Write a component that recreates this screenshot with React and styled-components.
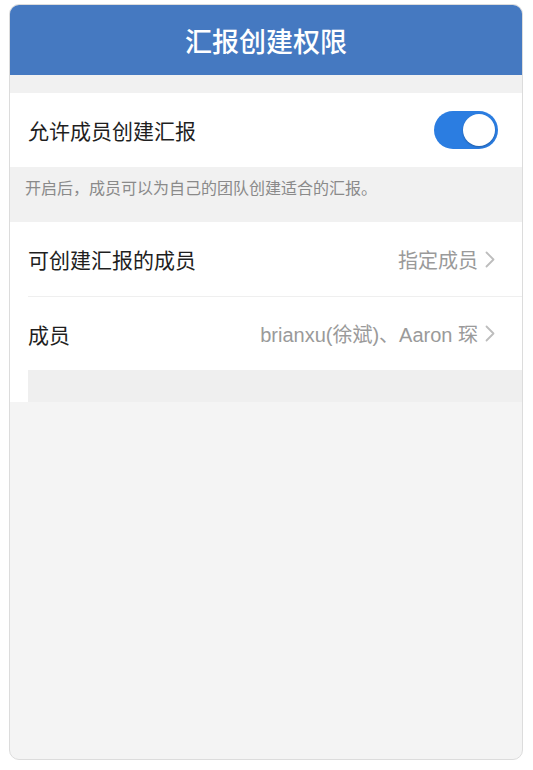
import React from "react";
import styled, { createGlobalStyle } from "styled-components";

const Global = createGlobalStyle`
  html, body { margin: 0; padding: 0; background: #ffffff; }
  body { font-family: "Noto Sans CJK SC", "Noto Sans", sans-serif; }
  * { box-sizing: border-box; }
`;

const Frame = styled.div`
  margin: 4px 0 0 9px;
  width: 514px;
  height: 756px;
  border: 1px solid #dcdcdc;
  border-radius: 10px;
  overflow: hidden;
  background: #f4f4f4;
  display: flex;
  flex-direction: column;
`;

const Header = styled.div`
  height: 70px;
  background: #4579c1;
  color: #ffffff;
  display: flex;
  align-items: center;
  justify-content: center;
  font-size: 27px;
  font-weight: 500;
`;

const Spacer = styled.div`
  height: ${(p) => p.h}px;
  background: ${(p) => p.bg || "#f1f1f1"};
`;

const Section = styled.div`
  background: #ffffff;
  display: flex;
  flex-direction: column;
`;

const Row = styled.div`
  height: 74px;
  display: flex;
  align-items: center;
  justify-content: space-between;
  margin-left: 18px;
  padding-right: 27px;
  border-top: ${(p) => (p.divider ? "1px solid #efefef" : "none")};
`;

const ToggleRow = styled(Row)`
  padding-right: 24px;
`;

const Label = styled.div`
  font-size: 21px;
  color: #1f1f1f;
`;

const Value = styled.div`
  display: flex;
  align-items: center;
  gap: 7px;
  font-family: "Liberation Sans", "Noto Sans CJK SC", sans-serif;
  font-size: 20px;
  color: #9a9a9a;
`;

const Help = styled.div`
  height: 55px;
  background: #f1f1f1;
  padding: 8px 0 0 15px;
  font-size: 16px;
  color: #8a8a8a;
`;

const Toggle = styled.div`
  width: 64px;
  height: 38px;
  border-radius: 19px;
  background: #2b7de1;
  display: flex;
  align-items: center;
  justify-content: flex-end;
  padding: 3px;
`;

const Knob = styled.div`
  width: 32px;
  height: 32px;
  border-radius: 50%;
  background: #ffffff;
  box-shadow: 0 1px 2px rgba(0, 0, 0, 0.25);
`;

const Band = styled.div`
  height: 32px;
  margin-left: 18px;
  background: #efefef;
`;

const BandWrap = styled.div`
  background: #ffffff;
`;

const Chevron = () => (
  <svg width="10" height="17" viewBox="0 0 10 17" fill="none">
    <polyline points="1.5,1.5 8.5,8.5 1.5,15.5" stroke="#bdbdbd" strokeWidth="1.8" strokeLinecap="round" strokeLinejoin="round" />
  </svg>
);

export default function App() {
  return (
    <>
      <Global />
      <Frame>
        <Header>汇报创建权限</Header>
        <Spacer h={18} />
        <Section>
          <ToggleRow>
            <Label>允许成员创建汇报</Label>
            <Toggle>
              <Knob />
            </Toggle>
          </ToggleRow>
        </Section>
        <Help>开启后，成员可以为自己的团队创建适合的汇报。</Help>
        <Section>
          <Row>
            <Label>可创建汇报的成员</Label>
            <Value>
              指定成员
              <Chevron />
            </Value>
          </Row>
          <Row divider>
            <Label>成员</Label>
            <Value>
              brianxu(徐斌)、Aaron 琛
              <Chevron />
            </Value>
          </Row>
        </Section>
        <BandWrap>
          <Band />
        </BandWrap>
      </Frame>
    </>
  );
}
